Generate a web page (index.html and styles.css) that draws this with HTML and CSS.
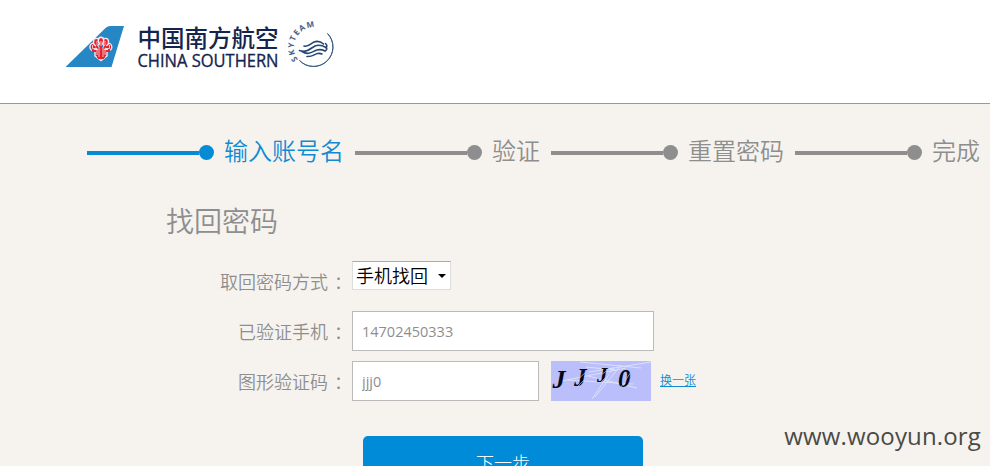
FILE: index.html
```html
<!DOCTYPE html>
<html lang="zh-CN">
<head>
<meta charset="utf-8">
<title>找回密码</title>
<link rel="stylesheet" href="styles.css">
</head>
<body>
<header class="header">
  <svg class="logo" width="280" height="56" viewBox="60 18 280 56" role="img" aria-label="中国南方航空">
    <path d="M65.500 67 105 28.500Q107 26 110 26H124L111.500 67Z" fill="#2787c5"/>
    <g stroke="#f4e9ee" stroke-width="1.400" fill="#e5222f">
      <ellipse cx="93.200" cy="47" rx="3.300" ry="3.600"/>
      <ellipse cx="108.500" cy="47" rx="3.300" ry="3.600"/>
      <ellipse cx="96.500" cy="42" rx="3" ry="3.600"/>
      <ellipse cx="105.500" cy="42" rx="3" ry="3.600"/>
      <ellipse cx="101" cy="40.500" rx="2.700" ry="3.200"/>
      <path d="M93 49.500H109L107 52V56L101 60.500L95 56V52Z"/>
    </g>
    <path d="M93 47v4h5v7M109 47v4h-5v7M97 42v5l2 2v10M105 42v5l-2 2v10M101 41v18" fill="none" stroke="#e5222f" stroke-width="1.900"/>
    <path d="M92.500 45v3.500h4.500V55M109.500 45v3.500H105V55M97 41v4l2 2v10M105 41v4l-2 2v10M101 41v5" fill="none" stroke="#f4e9ee" stroke-width=".8"/>
    <text class="logo-cn" x="137.500" y="46.500" textLength="141">中国南方航空</text>
    <text class="logo-en" x="137.500" y="66.500" textLength="141" lengthAdjust="spacingAndGlyphs">CHINA SOUTHERN</text>
    <path id="ring" d="M298 59.500A18 18 0 0 1 330 35" fill="none"/>
    <text class="logo-sky"><textPath href="#ring" textLength="45">SKYTEAM</textPath></text>
    <path d="M327.500 33.500A19.400 19.400 0 0 1 299.500 60.500A18.600 18.600 0 0 0 327.500 33.500Z" fill="#31557f" stroke="#31557f" stroke-width=".9"/>
    <g fill="none" stroke="#254674" stroke-width="1.600" stroke-linecap="round">
      <path d="M304 46C308 47.500 311 43.500 314 42Q319 40 323.500 44"/>
      <path d="M299.500 50.500C307 53 311 48 315 46Q320 44 326 47.500Q328 46 325.500 43.500"/>
      <path d="M302 51.500C309 56 313 51 317 50Q321 49 325 51Q328 49 326 47.500"/>
      <path d="M307 56.500C312 57 315 54 317.500 53.500Q320 53 322 54"/>
    </g>
  </svg>
</header>

<main class="main">
  <ol class="steps">
    <li class="step active"><span class="track"></span>输入账号名</li>
    <li class="step"><span class="track"></span>验证</li>
    <li class="step"><span class="track"></span>重置密码</li>
    <li class="step"><span class="track"></span>完成</li>
  </ol>

  <h1 class="title">找回密码</h1>

  <form class="form">
    <div class="row">
      <span class="label">取回密码方式<span class="colon">：</span></span>
      <div class="select">手机找回<i class="arrow"></i></div>
    </div>
    <div class="row">
      <label class="label" for="phone">已验证手机<span class="colon">：</span></label>
      <input class="input" id="phone" type="text" value="14702450333">
    </div>
    <div class="row">
      <label class="label" for="code">图形验证码<span class="colon">：</span></label>
      <input class="input input-code" id="code" type="text" value="jjj0">
      <svg class="captcha" width="100" height="40" viewBox="0 0 100 40">
        <rect width="100" height="40" fill="#babffb"/>
        <g stroke="#dce4fa" stroke-width=".9" fill="none">
          <path d="M29 1 90 7M38 11 100 1M11 20 75 7M37 15 86 27M17 19 82 23M63 6 41 38M70 4 44 36M35 6 65 9"/>
        </g>
        <g class="captcha-text">
          <text x="1.500" y="26.500" font-size="26">J</text>
          <text x="23" y="25" font-size="25">J</text>
          <text x="46" y="21" font-size="21">J</text>
          <text x="67" y="26" font-size="25">0</text>
        </g>
        <path d="M22 23 36 10M26 26 37 15M46 17 58 8M50 21 59 12M70 26 80 11" stroke="#babffb" stroke-width=".7"/>
      </svg>
      <a class="refresh" href="#">换一张</a>
    </div>
    <button class="submit" type="button">下一步</button>
  </form>
  <div class="watermark">www.wooyun.org</div>
</main>
</body>
</html>
```

FILE: styles.css
```css
* { box-sizing: border-box; }

body {
  margin: 0;
  height: 466px;
  overflow: hidden;
  background: #f6f3ee;
  color: #8e8e8e;
  font-family: "Open Sans", "Noto Sans CJK SC", sans-serif;
}

.header {
  height: 104px;
  padding: 18px 0 0 60px;
  background: #fff;
  border-bottom: 1px solid #999;
}

.logo { display: block; }

.logo-cn {
  font: 500 23.500px "Noto Sans CJK SC", sans-serif;
  fill: #14244d;
}

.logo-en {
  font: 400 19px "Open Sans", sans-serif;
  fill: #14244d;
  stroke: #14244d;
  stroke-width: .35px;
}

.logo-sky {
  font: 700 8px "Open Sans", sans-serif;
  fill: #465f87;
}

.main {
  position: relative;
  height: 362px;
}

.steps {
  display: flex;
  gap: 11px;
  margin: 0;
  padding: 28px 0 0 87px;
  list-style: none;
}

.step {
  display: flex;
  flex: none;
  align-items: center;
  gap: 10px;
  height: 36px;
  font: 350 24px/36px "Noto Sans CJK SC", sans-serif;
}

.track {
  display: flex;
  align-items: center;
  width: 127px;
  height: 15px;
  margin-top: 5px;
}

.track::before {
  content: "";
  flex: 1;
  height: 4px;
  margin-top: 1px;
  background: #8e8e8e;
}

.track::after {
  content: "";
  width: 15px;
  height: 15px;
  border-radius: 50%;
  background: #8e8e8e;
}

.active { color: #118ad3; }

.active .track::before,
.active .track::after { background: #058ad6; }

.title {
  margin: 32px 0 0 166px;
  font: 350 28px/40px "Noto Sans CJK SC", sans-serif;
}

.form { margin-top: 21px; }

.row {
  display: flex;
  height: 40px;
  margin-bottom: 10px;
}

.label {
  width: 346px;
  margin-right: 6px;
  text-align: right;
  font: 350 18px/40px "Noto Sans CJK SC", sans-serif;
}

.colon { margin: 0 -6px 0 6px; }

.select {
  display: flex;
  align-items: center;
  justify-content: space-between;
  width: 99px;
  height: 29px;
  padding: 0 4px 0 3px;
  border: 1px solid #ddd;
  border-top-color: #aaa;
  background: #fff;
  color: #000;
  font: 350 18px/27px "Noto Sans CJK SC", sans-serif;
}

.arrow {
  border: 4px solid transparent;
  border-top-color: #000;
  border-bottom: 0;
}

.input {
  width: 302px;
  height: 40px;
  padding: 0 9px;
  border: 1px solid #bbb;
  border-radius: 0;
  background: #fff;
  color: #8e8e8e;
  font: 400 14.500px "Open Sans", sans-serif;
}

.input-code {
  width: 187px;
  margin-right: 12px;
}

.captcha-text {
  font-family: "Liberation Serif", serif;
  font-weight: 700;
  font-style: italic;
  fill: #08081b;
}

.refresh {
  margin-left: 9px;
  color: #118ad3;
  font: 350 12px/38px "Noto Sans CJK SC", sans-serif;
}

.submit {
  display: block;
  width: 280px;
  height: 50px;
  margin: 35px 0 0 363px;
  padding: 0;
  border: 0;
  border-radius: 5px;
  background: #008bd8;
  color: #fff;
  font: 300 18px/52px "Noto Sans CJK SC", sans-serif;
}

.watermark {
  position: absolute;
  right: 9px;
  bottom: 13px;
  color: #4a4a46;
  font: 400 24px/34px "Open Sans", sans-serif;
  letter-spacing: .15px;
}
```
